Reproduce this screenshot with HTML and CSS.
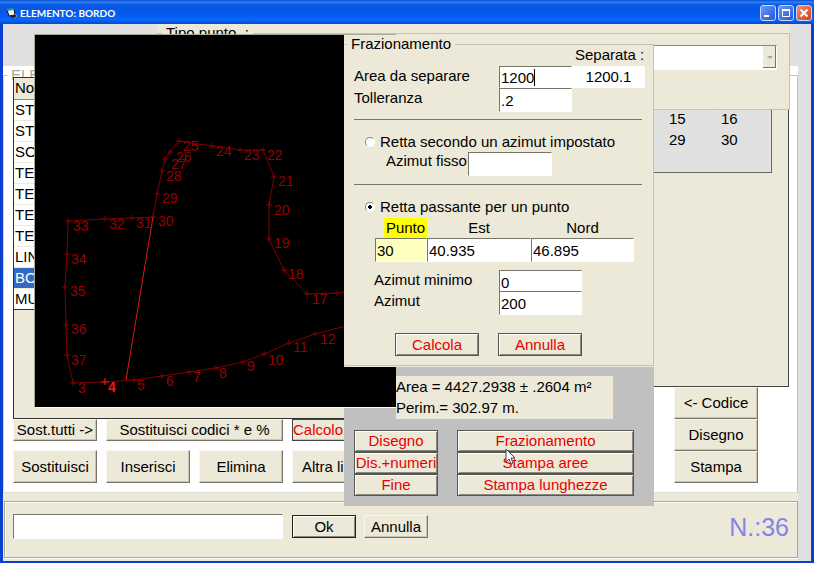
FILE: index.html
```html
<!DOCTYPE html>
<html lang="it">
<head>
    <meta charset="UTF-8">
    <meta name="viewport" content="width=device-width, initial-scale=1.0">
    <title>ELEMENTO: BORDO</title>
    <link rel="stylesheet" href="styles.css">
</head>
<body>
    <header class="titlebar">
        <svg class="app-icon" width="12" height="11" viewBox="0 0 12 11">
            <path d="M1 2l7-1 1 6-6 1z" fill="#f4f4ec" stroke="#111"/>
            <path d="M1 2l7-1" stroke="#18a0a0" stroke-width="2"/>
            <path d="M5 9l5-1" stroke="#222" stroke-width="2"/>
            <path d="M9 6l2 2-2 2" stroke="#a08860" fill="none"/>
        </svg>
        <h1>ELEMENTO: BORDO</h1>
        <div class="title-buttons">
            <button type="button" aria-label="Riduci a icona"><svg width="14" height="14" viewBox="0 0 14 14"><path d="M3 10h5" stroke="#fff" stroke-width="2"/></svg></button>
            <button type="button" aria-label="Ingrandisci"><svg width="14" height="14" viewBox="0 0 14 14"><path d="M3.500 4v6.500h7V4" fill="none" stroke="#fff"/><path d="M3 4h8" stroke="#fff" stroke-width="2"/></svg></button>
            <button type="button" class="close" aria-label="Chiudi"><svg width="14" height="14" viewBox="0 0 14 14"><path d="M3.500 3.500l7 7M10.500 3.500l-7 7" stroke="#fff" stroke-width="2"/></svg></button>
        </div>
    </header>

    <main class="client">
        <div class="top-strip">
            <div class="tipo">
                <fieldset>
                    <legend>Tipo punto&nbsp; :</legend>
                    <div class="combo">
                        <select aria-label="Tipo punto" disabled></select>
                        <span class="combo-arrow"></span>
                    </div>
                </fieldset>
            </div>
        </div>

        <section class="elements">
            <fieldset>
                <legend>ELE</legend>
                <div class="columns">
                    <div class="left-col">
                        <div class="list-box">
                            <table class="list">
                                <thead>
                                    <tr><th>No</th></tr>
                                </thead>
                                <tbody>
                                    <tr><td>ST</td></tr>
                                    <tr><td>ST</td></tr>
                                    <tr><td>SO</td></tr>
                                    <tr><td>TE</td></tr>
                                    <tr><td>TE</td></tr>
                                    <tr><td>TE</td></tr>
                                    <tr><td>TE</td></tr>
                                    <tr><td>LIN</td></tr>
                                    <tr class="selected"><td>BO</td></tr>
                                    <tr><td>MU</td></tr>
                                </tbody>
                            </table>
                        </div>
                        <div class="button-row">
                            <button type="button" class="btn">Sost.tutti -&gt;</button>
                            <button type="button" class="btn wide">Sostituisci codici * e %</button>
                            <button type="button" class="btn red calcolo">Calcolo</button>
                        </div>
                        <div class="button-row tall">
                            <button type="button" class="btn">Sostituisci</button>
                            <button type="button" class="btn">Inserisci</button>
                            <button type="button" class="btn">Elimina</button>
                            <button type="button" class="btn altra">Altra lin</button>
                        </div>
                    </div>
                    <div class="right-col">
                        <div class="points-box">
                            <table class="points">
                                <tr><td></td><td></td></tr>
                                <tr><td>15</td><td>16</td></tr>
                                <tr><td>29</td><td>30</td></tr>
                                <tr><td></td><td></td></tr>
                            </table>
                        </div>
                        <div class="button-stack">
                            <button type="button" class="btn">&lt;- Codice</button>
                            <button type="button" class="btn">Disegno</button>
                            <button type="button" class="btn">Stampa</button>
                        </div>
                    </div>
                </div>
            </fieldset>
        </section>

        <footer class="bottom">
            <div class="bottom-frame">
                <input type="text" class="field command" aria-label="Comando">
                <button type="button" class="btn default">Ok</button>
                <button type="button" class="btn">Annulla</button>
                <span class="count">N.:36</span>
            </div>
        </footer>
    </main>

    <!-- drawing window -->
    <div class="drawing">
        <svg width="361" height="372" viewBox="35 35 361 372">
            <defs>
                <marker id="tick" markerWidth="7" markerHeight="7" refX="3" refY="3" markerUnits="userSpaceOnUse">
                    <path d="M3 0v6M0 3h6" stroke="#800000" fill="none"/>
                </marker>
            </defs>
            <polyline class="border-line" points="350,325 315,334 289,343 264,354 243,362 216,368 189,372 162,376 134,380 105,382 73,383 67,355 66,325 65,287 67,254 68,221 105,219 132,218 153,217 157,194 162,171 165,159 170,152 179,141 212,146 240,150 263,150 274,177 269,205 269,239 284,270 307,294 337,293 350,292"/>
            <path d="M153 217L126 380" class="cut-line"/>
            <path d="M101 382h8M105 378v7" class="cut-line"/>
            <g class="labels">
                <text x="78" y="393">3</text>
                <text x="108" y="392" class="current">4</text>
                <text x="137" y="390">5</text>
                <text x="166" y="386">6</text>
                <text x="193" y="382">7</text>
                <text x="219" y="378">8</text>
                <text x="247" y="371">9</text>
                <text x="268" y="365">10</text>
                <text x="293" y="352">11</text>
                <text x="320" y="344">12</text>
                <text x="312" y="304">17</text>
                <text x="288" y="279">18</text>
                <text x="274" y="248">19</text>
                <text x="274" y="215">20</text>
                <text x="278" y="186">21</text>
                <text x="267" y="160">22</text>
                <text x="244" y="160">23</text>
                <text x="216" y="156">24</text>
                <text x="183" y="151">25</text>
                <text x="176" y="162">26</text>
                <text x="171" y="169">27</text>
                <text x="166" y="181">28</text>
                <text x="162" y="203">29</text>
                <text x="158" y="226">30</text>
                <text x="136" y="228">31</text>
                <text x="109" y="229">32</text>
                <text x="73" y="231">33</text>
                <text x="71" y="264">34</text>
                <text x="70" y="296">35</text>
                <text x="71" y="334">36</text>
                <text x="71" y="365">37</text>
            </g>
        </svg>
    </div>

    <!-- area tools window -->
    <form class="side">
        <div class="side-panel">
            <fieldset>
                <legend>Frazionamento</legend>
                <div class="area-grid">
                    <span class="separata-label">Separata :</span>
                    <label for="area">Area da separare</label>
                    <span class="caret-wrap"><input type="text" id="area" class="field" value="1200"><span class="caret"></span></span>
                    <output for="area">1200.1</output>
                    <label for="tolleranza">Tolleranza</label>
                    <input type="text" id="tolleranza" class="field" value=".2">
                </div>
                <hr>
                <div class="radio-row">
                    <input type="radio" name="retta" id="rettaAzimut">
                    <label for="rettaAzimut">Retta secondo un azimut impostato</label>
                </div>
                <div class="fisso-row">
                    <label for="azimutFisso">Azimut fisso</label>
                    <input type="text" id="azimutFisso" class="field">
                </div>
                <hr>
                <div class="radio-row">
                    <input type="radio" name="retta" id="rettaPunto" checked>
                    <label for="rettaPunto">Retta passante per un punto</label>
                </div>
                <div class="point-grid">
                    <label for="punto" class="hot">Punto</label>
                    <label for="est">Est</label>
                    <label for="nord">Nord</label>
                    <input type="text" id="punto" class="field yellow" value="30">
                    <input type="text" id="est" class="field" value="40.935">
                    <input type="text" id="nord" class="field" value="46.895">
                </div>
                <div class="azimut-grid">
                    <label for="azimutMin">Azimut minimo</label>
                    <input type="text" id="azimutMin" class="field" value="0">
                    <label for="azimut">Azimut</label>
                    <input type="text" id="azimut" class="field" value="200">
                </div>
                <div class="action-row">
                    <button type="button" class="btn red dark">Calcola</button>
                    <button type="button" class="btn red dark">Annulla</button>
                </div>
            </fieldset>
        </div>
        <p class="result">Area = 4427.2938 ± .2604 m²<br>Perim.= 302.97 m.</p>
        <div class="tool-grid">
            <button type="button" class="btn red dark">Disegno</button>
            <button type="button" class="btn red dark">Frazionamento</button>
            <button type="button" class="btn red dark">Dis.+numeri</button>
            <button type="button" class="btn red dark">Stampa aree</button>
            <button type="button" class="btn red dark">Fine</button>
            <button type="button" class="btn red dark">Stampa lunghezze</button>
        </div>
        <svg class="pointer" width="12" height="19" viewBox="0 0 12 19">
            <path d="M1 1v13l3-3 2 5 2-1-2-5h4z" fill="#fff" stroke="#444"/>
        </svg>
    </form>
</body>
</html>
```

FILE: styles.css
```css
* {
    box-sizing: border-box;
}

body {
    margin: 0;
    min-height: 100vh;
    position: relative;
    display: flex;
    flex-direction: column;
    font-family: "Liberation Sans", Arial, sans-serif;
    font-size: 15px;
    line-height: 18px;
    color: #000;
    background: #0a3fd0;
    overflow: hidden;
}

fieldset {
    margin: 0;
    padding: 0;
    min-width: 0;
    border: 1px solid #c4c2b4;
}

legend {
    padding: 0 4px;
    margin-left: 3px;
}

/* title bar */
.titlebar {
    height: 24px;
    display: flex;
    align-items: center;
    padding: 2px 2px 0 6px;
    background: linear-gradient(#0a48c8 0, #2b83f8 2px, #0757e2 5px, #0558ea 13px, #0767fc 20px, #0448cc 24px);
}

.titlebar h1 {
    flex: 1;
    margin: 0 0 0 2px;
    font-family: Lato, sans-serif;
    font-size: 10px;
    line-height: 14px;
    color: #fff;
}

.title-buttons {
    display: flex;
    gap: 2px;
}

.title-buttons button {
    width: 16px;
    height: 16px;
    padding: 0;
    border: 1px solid #c8d8ff;
    border-radius: 3px;
    background: linear-gradient(135deg, #6c98f4, #2458d8);
    display: flex;
}

.title-buttons .close {
    background: linear-gradient(135deg, #f09070, #d83c14);
}

/* main window */
.client {
    flex: 1;
    margin: 0 3px 3px;
    padding-right: 13px;
    background: #e0e0e0;
    display: flex;
    flex-direction: column;
}

.top-strip {
    height: 42px;
    position: relative;
}

.tipo {
    position: absolute;
    left: 154px;
    right: 8px;
    top: 0;
    z-index: 2;
    background: #ece9d8;
}

.tipo fieldset {
    height: 86px;
    padding: 3px 12px;
}

.tipo legend {
    margin-left: -8px;
}

.combo {
    position: relative;
    width: 60%;
    margin-left: auto;
}

.combo select {
    display: block;
    width: 100%;
    height: 25px;
    appearance: none;
    border: 1px solid;
    border-color: #8a887c #fff #fff #8a887c;
    border-radius: 0;
    background: #fff;
    opacity: 1;
}

.combo-arrow {
    position: absolute;
    top: 1px;
    right: 1px;
    width: 13px;
    height: 22px;
    border-right: 1px solid #77756a;
    border-bottom: 1px solid #77756a;
    background: #ece9d8;
}

.combo-arrow::after {
    content: "";
    position: absolute;
    left: 4px;
    top: 10px;
    border: 3px solid transparent;
    border-top-color: #aca899;
}

.elements {
    flex: 1;
    background: #fff;
}

.elements fieldset {
    height: 100%;
    border-left-color: #dcdcd4;
    border-bottom-color: #dcdcd4;
}

.elements legend {
    color: #aca899;
}

.columns {
    position: relative;
    display: flex;
    margin: -7px 8px 9px 9px;
}

.left-col {
    width: 380px;
}

.right-col {
    flex: 1;
}

.list-box {
    height: 342px;
    border: 1px solid #333;
    background: #ece9d8;
}

.list {
    width: 100%;
    border-collapse: collapse;
}

.list th,
.list td {
    height: 21px;
    padding: 0 1px;
    border-bottom: 1px solid #ece9d8;
    background: #fff;
    text-align: left;
    font-weight: normal;
}

.list th {
    background: #ece9d8;
    border-bottom-color: #888;
}

.list .selected td {
    background: #316ac5;
    color: #fff;
}

.list tr:last-child td {
    border-bottom-color: #333;
}

.points-box {
    height: 310px;
    padding: 10px 16px;
    border: 1px solid #444;
    border-left: 0;
    background: #ece9d8;
}

.points {
    margin-left: auto;
    border-spacing: 0;
    border: 1px solid #666;
    border-top: 0;
    background: #e0e0e0;
}

.points td {
    width: 52px;
    height: 21px;
    padding: 0 2px;
    border: 1px solid #e6e4dc;
    border-width: 0 1px 1px 0;
}

.points td:first-child {
    width: 200px;
    padding-left: 150px;
}

/* buttons */
.btn {
    height: 22px;
    padding: 0;
    border: 1px solid;
    border-color: #f8f6ee #77756a #77756a #f8f6ee;
    box-shadow: inset -1px -1px #c8c5b4;
    background: #ece9d8;
    color: #000;
    font: inherit;
    white-space: nowrap;
}

.btn.red {
    color: #e80000;
}

.btn.dark {
    border-color: #555;
    box-shadow: inset 1px 1px #fff, inset -1px -1px #8a887c;
}

.btn.default {
    border-color: #222;
    box-shadow: inset 1px 1px #fff, inset -1px -1px #8a887c;
}

.button-row {
    display: grid;
    grid-template-columns: repeat(4, 84px);
    gap: 9px;
}

.button-row .wide {
    grid-column: span 2;
}

.button-row .calcolo,
.button-row .altra {
    text-align: left;
}

.button-row .calcolo {
    border-color: #444;
}

.button-row .altra {
    padding-left: 9px;
}

.button-row.tall {
    margin-top: 9px;
}

.button-row.tall .btn {
    height: 33px;
}

.button-stack {
    width: 84px;
    margin: 0 31px 0 auto;
    display: flex;
    flex-direction: column;
}

.button-stack .btn {
    height: 32px;
}

/* text boxes */
.field {
    width: 100%;
    height: 24px;
    padding: 0 1px;
    border: 1px solid;
    border-color: #77756a #fff #fff #77756a;
    border-radius: 0;
    background: #fff;
    color: #000;
    font: inherit;
    outline: none;
}

.field.yellow {
    background: #ffffc0;
}

/* bottom bar */
.bottom {
    padding: 8px 0 3px 1px;
    background: #ece9d8;
}

.bottom-frame {
    display: flex;
    align-items: center;
    height: 57px;
    padding: 0 8px 6px;
    border: 1px solid #aca899;
    box-shadow: inset 1px 1px #fff, 0 1px #fff;
}

.bottom .command {
    width: 270px;
    height: 25px;
    margin-right: 9px;
}

.bottom .btn {
    width: 64px;
    height: 23px;
    margin-right: 8px;
}

.count {
    margin-left: auto;
    font-size: 25px;
    line-height: 24px;
    color: #8484e8;
}

/* drawing window */
.drawing {
    position: absolute;
    left: 34px;
    top: 34px;
    z-index: 3;
    border: 1px solid;
    border-color: #aca899 transparent #fff #aca899;
    border-right: 0;
}

.drawing svg {
    display: block;
    background: #000;
}

.border-line {
    fill: none;
    stroke: #800000;
    marker-mid: url(#tick);
}

.cut-line {
    fill: none;
    stroke: #e01818;
}

.labels {
    fill: #980000;
    font-size: 14px;
}

.labels .current {
    fill: #ff1010;
    font-weight: bold;
}

/* area tools window: the drawing lies between its grey back and its panels */
.side {
    position: absolute;
    left: 344px;
    top: 35px;
    width: 310px;
    padding-bottom: 10px;
    background: #c0c0c0;
}

.side-panel,
.result,
.tool-grid,
.pointer {
    position: relative;
    z-index: 4;
}

.side-panel {
    background: #ece9d8;
    padding-bottom: 1px;
}

.side-panel fieldset {
    padding: 0 8px 9px 9px;
    border-left-color: #ece9d8;
}

.side-panel legend {
    margin-left: -7px;
}

.side-panel hr {
    height: 1px;
    margin: 7px 3px 0 0;
    border: 0;
    background: #77756a;
}

.area-grid {
    display: grid;
    grid-template-columns: 145px 73px 73px;
    grid-template-rows: 20px 22px 24px;
    align-items: start;
    margin-top: -7px;
}

.area-grid label {
    line-height: 20px;
}

.separata-label {
    grid-column: 3;
    padding-left: 3px;
}

.area-grid output {
    height: 22px;
    line-height: 22px;
    background: #fff;
    text-align: center;
}

.caret-wrap {
    position: relative;
}

.caret-wrap .field {
    display: block;
    height: 22px;
}

.caret {
    position: absolute;
    left: 35px;
    top: 3px;
    width: 1px;
    height: 17px;
    background: #000;
}

.radio-row {
    display: flex;
    align-items: center;
    gap: 5px;
    margin-top: 13px;
    padding-left: 11px;
}

.radio-row input {
    appearance: none;
    width: 10px;
    height: 10px;
    margin: 0;
    border: 1px solid;
    border-color: #8a887c #fff #fff #8a887c;
    border-radius: 50%;
    background: #fff;
}

.radio-row input:checked {
    background: radial-gradient(circle, #000 2px, #fff 2px);
}

.fisso-row {
    display: grid;
    grid-template-columns: 82px 84px;
    margin: 1px 0 8px;
    padding-left: 32px;
}

.point-grid {
    display: grid;
    grid-template-columns: 52px 104px 103px;
    margin: 2px 0 0 21px;
    text-align: center;
}

.point-grid label {
    line-height: 20px;
}

.point-grid .hot {
    margin-left: 9px;
    background: #ff0;
}

.azimut-grid {
    display: grid;
    grid-template-columns: 125px 83px;
    grid-template-rows: 21px 25px;
    margin: 8px 0 0 20px;
}

.azimut-grid label {
    line-height: 20px;
}

.action-row {
    display: flex;
    gap: 19px;
    margin: 17px 0 0 41px;
}

.action-row .btn {
    width: 84px;
    height: 23px;
}

.result {
    margin: 9px 41px 11px 52px;
    height: 43px;
    line-height: 21px;
    background: #ece9d8;
    white-space: nowrap;
}

.tool-grid {
    display: grid;
    grid-template-columns: 84px 1fr;
    column-gap: 19px;
    margin: 0 20px 0 10px;
}

.side .pointer {
    position: absolute;
    left: 161px;
    top: 413px;
}
```
